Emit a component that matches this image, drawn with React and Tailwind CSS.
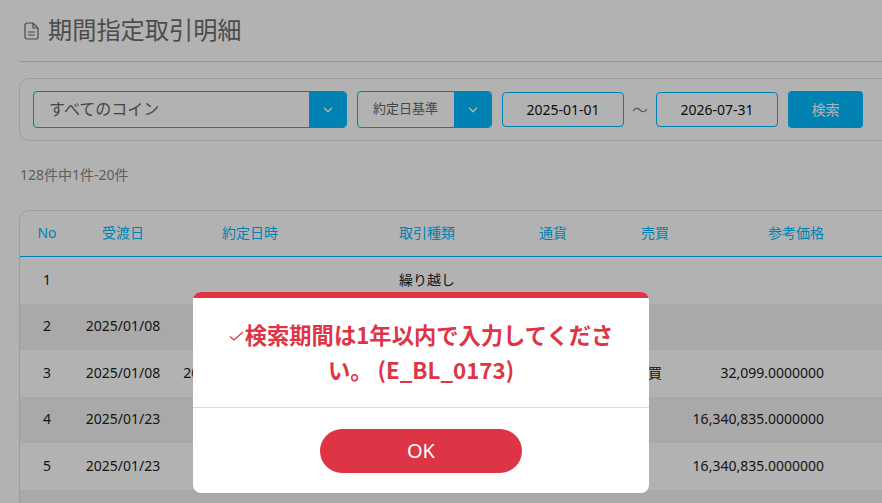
import React from 'react';
import { ChevronDown } from 'lucide-react';

const rows = [
  { no: 1, settle: '', time: '', kind: '繰り越し', side: '', price: '' },
  { no: 2, settle: '2025/01/08', time: '', kind: '', side: '', price: '' },
  { no: 3, settle: '2025/01/08', time: '2025/01/08 09:12:45', kind: '', side: '買', price: '32,099.0000000' },
  { no: 4, settle: '2025/01/23', time: '', kind: '', side: '', price: '16,340,835.0000000' },
  { no: 5, settle: '2025/01/23', time: '', kind: '', side: '', price: '16,340,835.0000000' },
  { no: 6, settle: '', time: '', kind: '', side: '', price: '' },
];

const gridCols = 'grid grid-cols-[54px_98px_156px_198px_54px_50px_50px_144px_100px] items-center';

function Select({ width, btn, text, textClass }) {
  return (
    <div className={`flex h-[37px] overflow-hidden rounded-[4px] border border-[#00bbff] ${width}`}>
      <div className={`flex-1 flex items-center pb-[1px] ${textClass}`}>{text}</div>
      <div className={`flex items-center justify-center bg-[#00bbff] ${btn}`}>
        <ChevronDown size={14} strokeWidth={2.5} className="text-white" />
      </div>
    </div>
  );
}

function DateBox({ value }) {
  return (
    <div className="flex h-[35px] w-[122px] items-center justify-center rounded-[4px] border border-[#00bbff] text-[14px] text-[#111]">
      {value}
    </div>
  );
}

export default function App() {
  return (
    <div className="relative h-screen w-full overflow-hidden bg-white font-['Noto_Sans','Noto_Sans_CJK_JP',sans-serif]">
      <div className="ml-[19px] w-[1000px]">
        <div className="flex h-[62px] items-center border-b border-[#d9d9d9] pl-[5px]">
          <svg width="15" height="18" viewBox="0 0 15 18" fill="none" stroke="#6a6a6a" strokeWidth="1.2" className="mr-[9px]">
            <path d="M1 3a2 2 0 0 1 2-2h6l5 5v9a2 2 0 0 1-2 2H3a2 2 0 0 1-2-2z" />
            <path d="M9 1v5h5M4 10h7M4 13h7" />
          </svg>
          <h1 className="text-[24.2px] leading-none text-[#6e6e6e]">期間指定取引明細</h1>
        </div>

        <div className="mt-[16px] flex h-[63px] items-center gap-[10px] rounded-[10px] border border-[#e3e3e3] pl-[13px]">
          <Select width="w-[314px]" btn="w-[37px]" text="すべてのコイン" textClass="pl-[15px] text-[16px] text-[#666]" />
          <Select width="w-[135px]" btn="w-[37px]" text="約定日基準" textClass="pl-[15px] text-[13px] text-[#666]" />
          <div className="flex items-center">
            <DateBox value="2025-01-01" />
            <span className="w-[32px] text-center text-[16px] text-[#888]">〜</span>
            <DateBox value="2026-07-31" />
          </div>
          <button className="h-[37px] w-[75px] rounded-[4px] bg-[#00bbff] text-[14px] text-white">検索</button>
        </div>

        <p className="mt-[24px] pl-[1px] text-[14px] leading-[20px] text-[#888]">128件中1件-20件</p>

        <div className="mt-[25px] rounded-t-[10px] border border-[#e0e0e0]">
          <div className={`${gridCols} h-[46px] border-b border-[#00bbff] pb-[2px] text-center text-[14px] text-[#00bbff]`}>
            <div>No</div>
            <div>受渡日</div>
            <div>約定日時</div>
            <div>取引種類</div>
            <div>通貨</div>
            <div />
            <div>売買</div>
            <div className="text-right">参考価格</div>
            <div />
          </div>
          {rows.map((r) => (
            <div key={r.no} className={`${gridCols} h-[46.5px] pb-[2px] text-center text-[14px] text-[#222] ${r.no % 2 === 0 ? 'bg-[#f2f2f2]' : ''}`}>
              <div>{r.no > 5 ? '' : r.no}</div>
              <div>{r.settle}</div>
              <div className="whitespace-nowrap">{r.time}</div>
              <div>{r.kind}</div>
              <div />
              <div />
              <div>{r.side}</div>
              <div className="text-right whitespace-nowrap">{r.price}</div>
              <div />
            </div>
          ))}
        </div>
      </div>

      <div className="fixed inset-0 bg-black/30" />

      <div className="absolute left-[193px] top-[292px] w-[456px] overflow-hidden rounded-[8px] bg-white">
        <div className="h-[6px] bg-[#dd3545]" />
        <div className="flex h-[110px] flex-col justify-center border-b border-[#dcdcdc] px-[31px] pb-[2px] text-center font-['Noto_Sans_CJK_JP',sans-serif] text-[22.3px] font-semibold leading-[35px] text-[#dd3545]">
          <p>
            <svg width="15" height="10" viewBox="0 0 15 10" fill="none" stroke="#dd3545" strokeWidth="1.2" className="mr-[1px] inline-block align-[3px]">
              <path d="M1 5.5 5 9l9-8" />
            </svg>
            検索期間は1年以内で入力してください。 (E_BL_0173)
          </p>
        </div>
        <div className="flex justify-center pt-[21px] pb-[20px]">
          <button className="h-[44px] w-[202px] rounded-full bg-[#dd3545] text-[20px] text-white">OK</button>
        </div>
      </div>
    </div>
  );
}
